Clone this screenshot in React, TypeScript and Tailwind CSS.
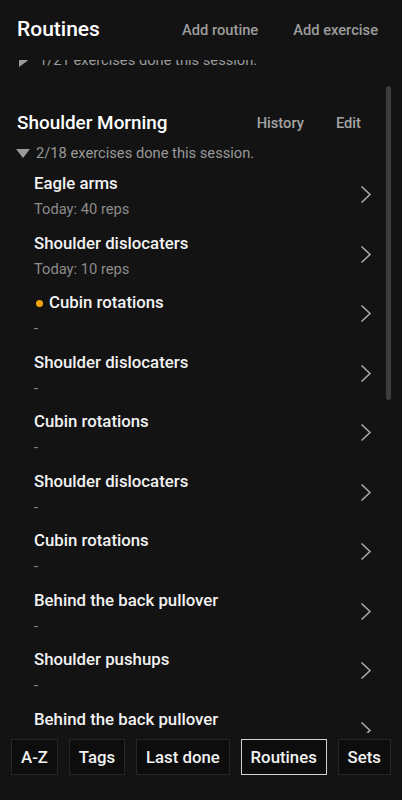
import React from "react";

const rows = [
  { name: "Eagle arms", sub: "Today: 40 reps" },
  { name: "Shoulder dislocaters", sub: "Today: 10 reps" },
  { name: "Cubin rotations", sub: "-", dot: true },
  { name: "Shoulder dislocaters", sub: "-" },
  { name: "Cubin rotations", sub: "-" },
  { name: "Shoulder dislocaters", sub: "-" },
  { name: "Cubin rotations", sub: "-" },
  { name: "Behind the back pullover", sub: "-" },
  { name: "Shoulder pushups", sub: "-" },
  { name: "Behind the back pullover", sub: "-" },
];

const tabs = ["A-Z", "Tags", "Last done", "Routines", "Sets"];

const Chevron = () => (
  <svg width="12" height="19" viewBox="0 0 12 19" fill="none">
    <path d="M1.5 1.5 L10 9.5 L1.5 17.5" stroke="#a8a8a8" strokeWidth="1.6" />
  </svg>
);

const ExerciseRow = ({ name, sub, dot }: { name: string; sub: string; dot?: boolean }) => (
  <div className="flex h-[59.5px] shrink-0 items-start pl-[34px] pr-[30px]">
    <div className="flex grow flex-col">
      <div className="flex h-[24px] items-center gap-[6px] text-[16.8px] font-medium text-[#f2f2f2]">
        {dot && <span className="ml-[2px] h-[7px] w-[7px] rounded-full bg-[#f5a30a]" />}
        {name}
      </div>
      <div className="mt-[1px] h-[24px] text-[14.7px] leading-[24px] text-[#8c8c8c]">{sub}</div>
    </div>
    <div className="mt-[13px]">
      <Chevron />
    </div>
  </div>
);

export default function App() {
  return (
    <div
      className="flex h-[800px] w-[402px] flex-col overflow-hidden bg-[#131313]"
      style={{ fontFamily: "Roboto, 'Noto Sans', sans-serif" }}
    >
      <header className="flex h-[60px] shrink-0 items-center pb-[1px] pl-[17px] pr-[24px]">
        <h1 className="grow text-[21px] font-medium text-white">Routines</h1>
        <div className="flex gap-[35px] pt-[2px] text-[14.7px] font-medium text-[#9c9c9c]">
          <span>Add routine</span>
          <span>Add exercise</span>
        </div>
      </header>

      <div className="relative h-[673px] shrink-0 overflow-hidden">
        <div className="-mt-[10px] flex flex-col">
          <div className="flex h-[20px] items-center gap-[11px] pl-[19px] text-[14.7px] text-[#9a9a9a]">
            <svg width="9" height="13" viewBox="0 0 9 13">
              <path d="M0 0 L9 6.5 L0 13 Z" fill="#9a9a9a" />
            </svg>
            1/21 exercises done this session.
          </div>

          <div className="mt-[39px] flex h-[28px] items-center pl-[17px] pr-[41px]">
            <h2 className="grow text-[18.9px] font-medium text-white">Shoulder Morning</h2>
            <div className="flex gap-[32px] text-[14.7px] font-medium text-[#a4a4a4]">
              <span>History</span>
              <span>Edit</span>
            </div>
          </div>

          <div className="mt-[6px] flex h-[20px] items-center gap-[6px] pl-[16px] text-[14.7px] text-[#999999]">
            <svg width="14" height="9" viewBox="0 0 14 9">
              <path d="M0 0 L14 0 L7 9 Z" fill="#9a9a9a" />
            </svg>
            2/18 exercises done this session.
          </div>

          <div className="mt-[9px] flex flex-col">
            {rows.map((r, i) => (
              <ExerciseRow key={i} {...r} />
            ))}
          </div>
        </div>

        <div className="absolute left-[386px] top-[26px] h-[314px] w-[5px] rounded-full bg-[#3c3c3c]" />
      </div>

      <nav className="flex shrink-0 justify-between px-[11px] pt-[6px]">
        {tabs.map((t) => (
          <button
            key={t}
            className={
              t === "Routines"
                ? "h-[36px] border border-[#d4d4d4] bg-[#0d0d0d] px-[9px] pt-[1px] text-[16.8px] font-medium text-[#f2f2f2]"
                : "h-[36px] border border-[#262626] bg-[#0d0d0d] px-[9px] pt-[1px] text-[16.8px] font-medium text-[#f2f2f2]"
            }
          >
            {t}
          </button>
        ))}
      </nav>
    </div>
  );
}
